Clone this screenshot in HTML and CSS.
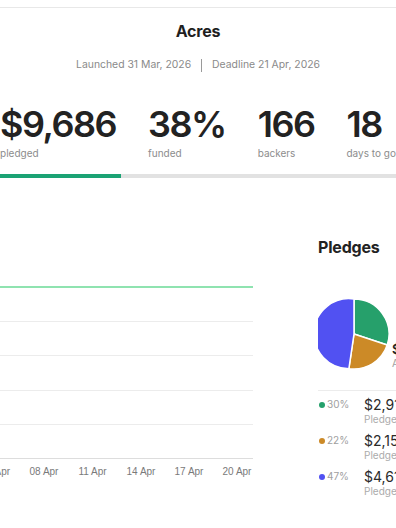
FILE: index.html
```html
<!DOCTYPE html>
<html lang="en">
<head>
    <meta charset="UTF-8">
    <meta name="viewport" content="width=device-width, initial-scale=1.0">
    <title>Acres - Campaign</title>
    <link rel="stylesheet" href="styles.css">
</head>
<body>
    <div class="page">
        <div class="topbar"></div>

        <!-- project header -->
        <header class="project-head">
            <h1 class="project-title">Acres</h1>
            <div class="project-dates">
                <span>Launched 31 Mar, 2026</span>
                <span class="sep"></span>
                <span>Deadline 21 Apr, 2026</span>
            </div>
        </header>

        <!-- headline numbers -->
        <div class="stats">
            <div class="stat">
                <div class="stat-value">$9,686</div>
                <div class="stat-label">pledged</div>
            </div>
            <div class="stat">
                <div class="stat-value">38%</div>
                <div class="stat-label">funded</div>
            </div>
            <div class="stat">
                <div class="stat-value">166</div>
                <div class="stat-label">backers</div>
            </div>
            <div class="stat">
                <div class="stat-value">18</div>
                <div class="stat-label">days to go</div>
            </div>
        </div>

        <div class="progress"><div class="progress-fill" style="width: 38%;"></div></div>

        <div class="content">
            <!-- pledges over time -->
            <div class="chart">
                <svg width="351" height="260" viewBox="0 0 351 260">
                    <g stroke="#ececec" stroke-width="1">
                        <line x1="30" y1="91.5" x2="351" y2="91.5" />
                        <line x1="30" y1="125.5" x2="351" y2="125.5" />
                        <line x1="30" y1="160.5" x2="351" y2="160.5" />
                        <line x1="30" y1="194.5" x2="351" y2="194.5" />
                    </g>
                    <line x1="30" y1="228.5" x2="351" y2="228.5" stroke="#dddddd" stroke-width="1" />
                    <line x1="30" y1="57" x2="351" y2="57" stroke="#8fe3b0" stroke-width="2" />
                    <g class="axis-label" text-anchor="middle">
                        <text x="45.5" y="245">02 Apr</text>
                        <text x="93.7" y="245">05 Apr</text>
                        <text x="142" y="245">08 Apr</text>
                        <text x="190.5" y="245">11 Apr</text>
                        <text x="239" y="245">14 Apr</text>
                        <text x="287" y="245">17 Apr</text>
                        <text x="335" y="245">20 Apr</text>
                    </g>
                </svg>
            </div>

            <!-- pledges breakdown -->
            <div class="pledges">
                <h2 class="pledges-title">Pledges</h2>
                <div class="pie-row">
                    <svg class="pie" width="72" height="72" viewBox="0 0 72 72">
                        <g stroke="#fff" stroke-width="1.5" stroke-linejoin="round">
                            <path d="M36,36 L36,1 A35,35 0 0 1 69.21,47.05 Z" fill="#26a06b" />
                            <path d="M36,36 L69.21,47.05 A35,35 0 0 1 30.9,70.63 Z" fill="#cc8a27" />
                            <path d="M36,36 L30.9,70.63 A35,35 0 1 1 36,1 Z" fill="#5151f2" />
                        </g>
                    </svg>
                    <div class="pie-total">
                        <div class="pie-amount">$9,686</div>
                        <div class="pie-note">All pledges</div>
                    </div>
                </div>

                <div class="pledge-list">
                    <div class="pledge-row">
                        <div class="pledge-pct"><span class="dot green"></span>30%</div>
                        <div>
                            <div class="pledge-amount">$2,915</div>
                            <div class="pledge-note">Pledged by 51 backers</div>
                        </div>
                    </div>
                    <div class="pledge-row">
                        <div class="pledge-pct"><span class="dot orange"></span>22%</div>
                        <div>
                            <div class="pledge-amount">$2,156</div>
                            <div class="pledge-note">Pledged by 38 backers</div>
                        </div>
                    </div>
                    <div class="pledge-row">
                        <div class="pledge-pct"><span class="dot blue"></span>47%</div>
                        <div>
                            <div class="pledge-amount">$4,615</div>
                            <div class="pledge-note">Pledged by 77 backers</div>
                        </div>
                    </div>
                </div>
            </div>
        </div>
    </div>
</body>
</html>
```

FILE: styles.css
```css
body {
    margin: 0;
    padding: 0;
    background: #fff;
    color: #222;
    font-family: Inter, "Noto Sans", sans-serif;
    display: flex;
    justify-content: center; /* page is wider than the window, keep it centred */
    overflow: hidden;
}

.page {
    flex: none;
    width: 640px;
}

.topbar {
    height: 7px;
    border-bottom: 1px solid #e8e8e8;
}

.project-head {
    text-align: center;
    padding-top: 12px;
}

.project-title {
    margin: 0;
    font-size: 16px;
    line-height: 22px;
    font-weight: 700;
    letter-spacing: -0.2px;
    color: #1f1f1f;
}

.project-dates {
    display: flex;
    justify-content: center;
    align-items: center;
    margin-top: 16px;
    font-size: 10.4px;
    line-height: 14px;
    color: #8a8a8a;
}

    .project-dates .sep {
        width: 0;
        height: 13px;
        border-left: 1px solid #9a9a9a;
        margin: 0 10px;
    }

.stats {
    display: flex;
    justify-content: center;
    gap: 32px;
    margin-top: 31px;
}

.stat-value {
    font-size: 36px;
    line-height: 43px;
    font-weight: 600;
    letter-spacing: -1.5px;
    color: #222;
}

.stat-label {
    font-size: 10px;
    line-height: 13px;
    color: #8c8c8c;
    margin-top: 1px;
}

.progress {
    height: 4px;
    background: #e2e2e2;
    margin-top: 14px;
}

.progress-fill {
    height: 100%;
    background: #1ba374;
}

.content {
    display: grid;
    grid-template-columns: 351px 1fr;
    column-gap: 65px;
    padding: 0 24px;
    margin-top: 52px;
}

.chart svg {
    display: block;
}

.axis-label {
    font-family: "Liberation Sans", Arial, sans-serif;
    font-size: 10px;
    fill: #7a7a7a;
}

.pledges-title {
    margin: 0;
    padding-top: 6px;
    font-size: 16px;
    line-height: 22px;
    font-weight: 700;
    letter-spacing: -0.2px;
    color: #222;
}

.pie-row {
    display: flex;
    align-items: flex-end;
    gap: 2px;
    margin-top: 40px;
}

.pie {
    display: block;
}

.pie-total {
    padding-bottom: 1px;
}

.pie-amount {
    font-size: 13px;
    line-height: 15px;
    font-weight: 600;
    color: #222;
}

.pie-note {
    font-size: 10px;
    line-height: 12px;
    color: #a0a0a0;
}

.pledge-list {
    margin-top: 20px;
    border-top: 1px solid #ececec;
    padding-top: 5px;
}

.pledge-row {
    display: grid;
    grid-template-columns: 46px 1fr;
    align-items: start;
    height: 36px;
}

.pledge-pct {
    display: flex;
    align-items: center;
    gap: 2px;
    font-size: 10px;
    line-height: 17px;
    color: #a0a0a0;
}

.dot {
    width: 6px;
    height: 6px;
    border-radius: 50%;
    margin-left: 1px;
}

    .dot.green { background: #26a06b; }
    .dot.orange { background: #cc8a27; }
    .dot.blue { background: #5151f2; }

.pledge-amount {
    font-size: 14px;
    line-height: 17px;
    color: #2a2a2a;
    white-space: nowrap;
}

.pledge-note {
    font-size: 10px;
    line-height: 12px;
    color: #ababab;
    white-space: nowrap;
}
```
